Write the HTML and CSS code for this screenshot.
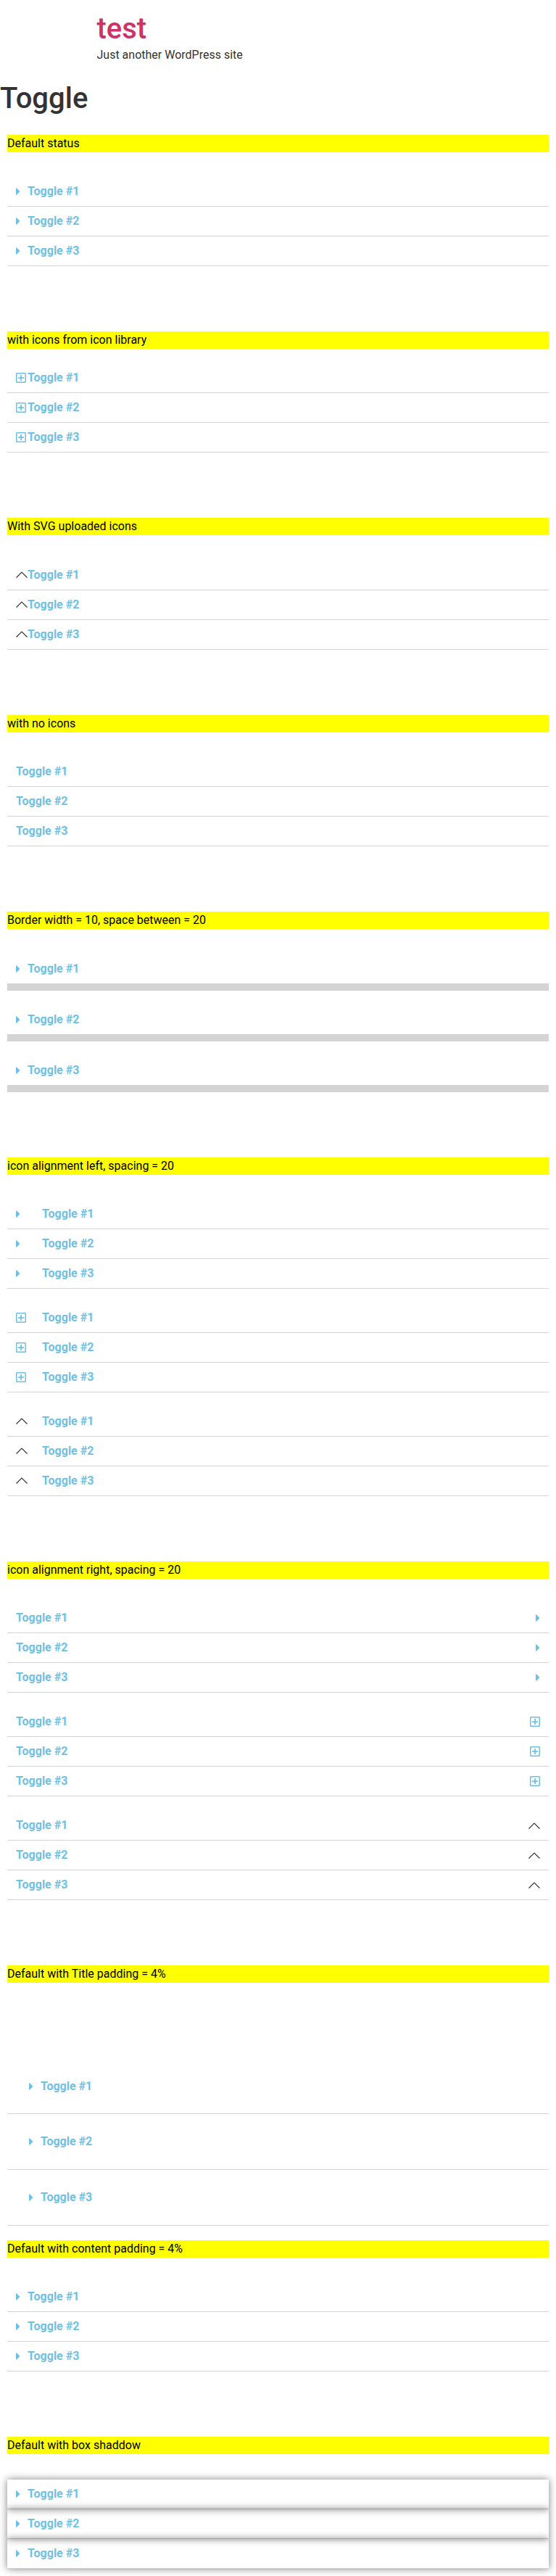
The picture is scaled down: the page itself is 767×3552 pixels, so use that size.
FILE: index.html
```html
<!DOCTYPE html>
<html lang="en">
<head>
<meta charset="utf-8">
<title>Toggle – test</title>
<link rel="stylesheet" href="styles.css">
</head>
<body>
<header class="site-header">
  <h1 class="site-title"><a href="#">test</a></h1>
  <p class="site-description">Just another WordPress site</p>
</header>
<main>
  <h1 class="page-title">Toggle</h1>
  <div class="content">

    <section class="demo demo-first">
      <p class="label">Default status</p>
      <div class="toggle">
        <div class="item"><div class="title"><span class="icon"><svg class="caret" viewBox="0 0 192 512"><path d="M0 384.662V127.338c0-17.818 21.543-26.741 34.142-14.142l128.662 128.662c7.81 7.81 7.81 20.474 0 28.284L34.142 398.804C21.543 411.404 0 402.48 0 384.662z"/></svg></span><span class="text">Toggle #1</span></div></div>
        <div class="item"><div class="title"><span class="icon"><svg class="caret" viewBox="0 0 192 512"><path d="M0 384.662V127.338c0-17.818 21.543-26.741 34.142-14.142l128.662 128.662c7.81 7.81 7.81 20.474 0 28.284L34.142 398.804C21.543 411.404 0 402.48 0 384.662z"/></svg></span><span class="text">Toggle #2</span></div></div>
        <div class="item"><div class="title"><span class="icon"><svg class="caret" viewBox="0 0 192 512"><path d="M0 384.662V127.338c0-17.818 21.543-26.741 34.142-14.142l128.662 128.662c7.81 7.81 7.81 20.474 0 28.284L34.142 398.804C21.543 411.404 0 402.48 0 384.662z"/></svg></span><span class="text">Toggle #3</span></div></div>
      </div>
    </section>

    <section class="demo">
      <p class="label label-close">with icons from icon library</p>
      <div class="toggle">
        <div class="item"><div class="title"><span class="icon"><svg class="plus" viewBox="0 0 448 512"><path d="M352 240v32c0 6.6-5.4 12-12 12h-88v88c0 6.6-5.4 12-12 12h-32c-6.6 0-12-5.4-12-12v-88h-88c-6.6 0-12-5.4-12-12v-32c0-6.6 5.4-12 12-12h88v-88c0-6.6 5.4-12 12-12h32c6.6 0 12 5.4 12 12v88h88c6.6 0 12 5.4 12 12zm96-160v352c0 26.5-21.5 48-48 48H48c-26.5 0-48-21.5-48-48V80c0-26.5 21.5-48 48-48h352c26.5 0 48 21.5 48 48zm-48 346V86c0-3.3-2.7-6-6-6H54c-3.3 0-6 2.7-6 6v340c0 3.3 2.7 6 6 6h340c3.3 0 6-2.7 6-6z"/></svg></span><span class="text">Toggle #1</span></div></div>
        <div class="item"><div class="title"><span class="icon"><svg class="plus" viewBox="0 0 448 512"><path d="M352 240v32c0 6.6-5.4 12-12 12h-88v88c0 6.6-5.4 12-12 12h-32c-6.6 0-12-5.4-12-12v-88h-88c-6.6 0-12-5.4-12-12v-32c0-6.6 5.4-12 12-12h88v-88c0-6.6 5.4-12 12-12h32c6.6 0 12 5.4 12 12v88h88c6.6 0 12 5.4 12 12zm96-160v352c0 26.5-21.5 48-48 48H48c-26.5 0-48-21.5-48-48V80c0-26.5 21.5-48 48-48h352c26.5 0 48 21.5 48 48zm-48 346V86c0-3.3-2.7-6-6-6H54c-3.3 0-6 2.7-6 6v340c0 3.3 2.7 6 6 6h340c3.3 0 6-2.7 6-6z"/></svg></span><span class="text">Toggle #2</span></div></div>
        <div class="item"><div class="title"><span class="icon"><svg class="plus" viewBox="0 0 448 512"><path d="M352 240v32c0 6.6-5.4 12-12 12h-88v88c0 6.6-5.4 12-12 12h-32c-6.6 0-12-5.4-12-12v-88h-88c-6.6 0-12-5.4-12-12v-32c0-6.6 5.4-12 12-12h88v-88c0-6.6 5.4-12 12-12h32c6.6 0 12 5.4 12 12v88h88c6.6 0 12 5.4 12 12zm96-160v352c0 26.5-21.5 48-48 48H48c-26.5 0-48-21.5-48-48V80c0-26.5 21.5-48 48-48h352c26.5 0 48 21.5 48 48zm-48 346V86c0-3.3-2.7-6-6-6H54c-3.3 0-6 2.7-6 6v340c0 3.3 2.7 6 6 6h340c3.3 0 6-2.7 6-6z"/></svg></span><span class="text">Toggle #3</span></div></div>
      </div>
    </section>

    <section class="demo">
      <p class="label">With SVG uploaded icons</p>
      <div class="toggle">
        <div class="item"><div class="title"><span class="icon"><svg class="chev" viewBox="0 0 16 9"><polyline points="0.5,8.5 8,1 15.5,8.5"/></svg></span><span class="text">Toggle #1</span></div></div>
        <div class="item"><div class="title"><span class="icon"><svg class="chev" viewBox="0 0 16 9"><polyline points="0.5,8.5 8,1 15.5,8.5"/></svg></span><span class="text">Toggle #2</span></div></div>
        <div class="item"><div class="title"><span class="icon"><svg class="chev" viewBox="0 0 16 9"><polyline points="0.5,8.5 8,1 15.5,8.5"/></svg></span><span class="text">Toggle #3</span></div></div>
      </div>
    </section>

    <section class="demo">
      <p class="label">with no icons</p>
      <div class="toggle">
        <div class="item"><div class="title"><span class="text">Toggle #1</span></div></div>
        <div class="item"><div class="title"><span class="text">Toggle #2</span></div></div>
        <div class="item"><div class="title"><span class="text">Toggle #3</span></div></div>
      </div>
    </section>

    <section class="demo">
      <p class="label">Border width = 10, space between = 20</p>
      <div class="toggle toggle-spaced">
        <div class="item"><div class="title"><span class="icon"><svg class="caret" viewBox="0 0 192 512"><path d="M0 384.662V127.338c0-17.818 21.543-26.741 34.142-14.142l128.662 128.662c7.81 7.81 7.81 20.474 0 28.284L34.142 398.804C21.543 411.404 0 402.48 0 384.662z"/></svg></span><span class="text">Toggle #1</span></div></div>
        <div class="item"><div class="title"><span class="icon"><svg class="caret" viewBox="0 0 192 512"><path d="M0 384.662V127.338c0-17.818 21.543-26.741 34.142-14.142l128.662 128.662c7.81 7.81 7.81 20.474 0 28.284L34.142 398.804C21.543 411.404 0 402.48 0 384.662z"/></svg></span><span class="text">Toggle #2</span></div></div>
        <div class="item"><div class="title"><span class="icon"><svg class="caret" viewBox="0 0 192 512"><path d="M0 384.662V127.338c0-17.818 21.543-26.741 34.142-14.142l128.662 128.662c7.81 7.81 7.81 20.474 0 28.284L34.142 398.804C21.543 411.404 0 402.48 0 384.662z"/></svg></span><span class="text">Toggle #3</span></div></div>
      </div>
    </section>

    <section class="demo">
      <p class="label">icon alignment left, spacing = 20</p>
      <div class="toggle toggle-left">
        <div class="item"><div class="title"><span class="icon"><svg class="caret" viewBox="0 0 192 512"><path d="M0 384.662V127.338c0-17.818 21.543-26.741 34.142-14.142l128.662 128.662c7.81 7.81 7.81 20.474 0 28.284L34.142 398.804C21.543 411.404 0 402.48 0 384.662z"/></svg></span><span class="text">Toggle #1</span></div></div>
        <div class="item"><div class="title"><span class="icon"><svg class="caret" viewBox="0 0 192 512"><path d="M0 384.662V127.338c0-17.818 21.543-26.741 34.142-14.142l128.662 128.662c7.81 7.81 7.81 20.474 0 28.284L34.142 398.804C21.543 411.404 0 402.48 0 384.662z"/></svg></span><span class="text">Toggle #2</span></div></div>
        <div class="item"><div class="title"><span class="icon"><svg class="caret" viewBox="0 0 192 512"><path d="M0 384.662V127.338c0-17.818 21.543-26.741 34.142-14.142l128.662 128.662c7.81 7.81 7.81 20.474 0 28.284L34.142 398.804C21.543 411.404 0 402.48 0 384.662z"/></svg></span><span class="text">Toggle #3</span></div></div>
      </div>
      <div class="toggle toggle-left">
        <div class="item"><div class="title"><span class="icon"><svg class="plus" viewBox="0 0 448 512"><path d="M352 240v32c0 6.6-5.4 12-12 12h-88v88c0 6.6-5.4 12-12 12h-32c-6.6 0-12-5.4-12-12v-88h-88c-6.6 0-12-5.4-12-12v-32c0-6.6 5.4-12 12-12h88v-88c0-6.6 5.4-12 12-12h32c6.6 0 12 5.4 12 12v88h88c6.6 0 12 5.4 12 12zm96-160v352c0 26.5-21.5 48-48 48H48c-26.5 0-48-21.5-48-48V80c0-26.5 21.5-48 48-48h352c26.5 0 48 21.5 48 48zm-48 346V86c0-3.3-2.7-6-6-6H54c-3.3 0-6 2.7-6 6v340c0 3.3 2.7 6 6 6h340c3.3 0 6-2.7 6-6z"/></svg></span><span class="text">Toggle #1</span></div></div>
        <div class="item"><div class="title"><span class="icon"><svg class="plus" viewBox="0 0 448 512"><path d="M352 240v32c0 6.6-5.4 12-12 12h-88v88c0 6.6-5.4 12-12 12h-32c-6.6 0-12-5.4-12-12v-88h-88c-6.6 0-12-5.4-12-12v-32c0-6.6 5.4-12 12-12h88v-88c0-6.6 5.4-12 12-12h32c6.6 0 12 5.4 12 12v88h88c6.6 0 12 5.4 12 12zm96-160v352c0 26.5-21.5 48-48 48H48c-26.5 0-48-21.5-48-48V80c0-26.5 21.5-48 48-48h352c26.5 0 48 21.5 48 48zm-48 346V86c0-3.3-2.7-6-6-6H54c-3.3 0-6 2.7-6 6v340c0 3.3 2.7 6 6 6h340c3.3 0 6-2.7 6-6z"/></svg></span><span class="text">Toggle #2</span></div></div>
        <div class="item"><div class="title"><span class="icon"><svg class="plus" viewBox="0 0 448 512"><path d="M352 240v32c0 6.6-5.4 12-12 12h-88v88c0 6.6-5.4 12-12 12h-32c-6.6 0-12-5.4-12-12v-88h-88c-6.6 0-12-5.4-12-12v-32c0-6.6 5.4-12 12-12h88v-88c0-6.6 5.4-12 12-12h32c6.6 0 12 5.4 12 12v88h88c6.6 0 12 5.4 12 12zm96-160v352c0 26.5-21.5 48-48 48H48c-26.5 0-48-21.5-48-48V80c0-26.5 21.5-48 48-48h352c26.5 0 48 21.5 48 48zm-48 346V86c0-3.3-2.7-6-6-6H54c-3.3 0-6 2.7-6 6v340c0 3.3 2.7 6 6 6h340c3.3 0 6-2.7 6-6z"/></svg></span><span class="text">Toggle #3</span></div></div>
      </div>
      <div class="toggle toggle-left">
        <div class="item"><div class="title"><span class="icon"><svg class="chev" viewBox="0 0 16 9"><polyline points="0.5,8.5 8,1 15.5,8.5"/></svg></span><span class="text">Toggle #1</span></div></div>
        <div class="item"><div class="title"><span class="icon"><svg class="chev" viewBox="0 0 16 9"><polyline points="0.5,8.5 8,1 15.5,8.5"/></svg></span><span class="text">Toggle #2</span></div></div>
        <div class="item"><div class="title"><span class="icon"><svg class="chev" viewBox="0 0 16 9"><polyline points="0.5,8.5 8,1 15.5,8.5"/></svg></span><span class="text">Toggle #3</span></div></div>
      </div>
    </section>

    <section class="demo">
      <p class="label">icon alignment right, spacing = 20</p>
      <div class="toggle toggle-right">
        <div class="item"><div class="title"><span class="text">Toggle #1</span><span class="icon"><svg class="caret" viewBox="0 0 192 512"><path d="M0 384.662V127.338c0-17.818 21.543-26.741 34.142-14.142l128.662 128.662c7.81 7.81 7.81 20.474 0 28.284L34.142 398.804C21.543 411.404 0 402.48 0 384.662z"/></svg></span></div></div>
        <div class="item"><div class="title"><span class="text">Toggle #2</span><span class="icon"><svg class="caret" viewBox="0 0 192 512"><path d="M0 384.662V127.338c0-17.818 21.543-26.741 34.142-14.142l128.662 128.662c7.81 7.81 7.81 20.474 0 28.284L34.142 398.804C21.543 411.404 0 402.48 0 384.662z"/></svg></span></div></div>
        <div class="item"><div class="title"><span class="text">Toggle #3</span><span class="icon"><svg class="caret" viewBox="0 0 192 512"><path d="M0 384.662V127.338c0-17.818 21.543-26.741 34.142-14.142l128.662 128.662c7.81 7.81 7.81 20.474 0 28.284L34.142 398.804C21.543 411.404 0 402.48 0 384.662z"/></svg></span></div></div>
      </div>
      <div class="toggle toggle-right">
        <div class="item"><div class="title"><span class="text">Toggle #1</span><span class="icon"><svg class="plus" viewBox="0 0 448 512"><path d="M352 240v32c0 6.6-5.4 12-12 12h-88v88c0 6.6-5.4 12-12 12h-32c-6.6 0-12-5.4-12-12v-88h-88c-6.6 0-12-5.4-12-12v-32c0-6.6 5.4-12 12-12h88v-88c0-6.6 5.4-12 12-12h32c6.6 0 12 5.4 12 12v88h88c6.6 0 12 5.4 12 12zm96-160v352c0 26.5-21.5 48-48 48H48c-26.5 0-48-21.5-48-48V80c0-26.5 21.5-48 48-48h352c26.5 0 48 21.5 48 48zm-48 346V86c0-3.3-2.7-6-6-6H54c-3.3 0-6 2.7-6 6v340c0 3.3 2.7 6 6 6h340c3.3 0 6-2.7 6-6z"/></svg></span></div></div>
        <div class="item"><div class="title"><span class="text">Toggle #2</span><span class="icon"><svg class="plus" viewBox="0 0 448 512"><path d="M352 240v32c0 6.6-5.4 12-12 12h-88v88c0 6.6-5.4 12-12 12h-32c-6.6 0-12-5.4-12-12v-88h-88c-6.6 0-12-5.4-12-12v-32c0-6.6 5.4-12 12-12h88v-88c0-6.6 5.4-12 12-12h32c6.6 0 12 5.4 12 12v88h88c6.6 0 12 5.4 12 12zm96-160v352c0 26.5-21.5 48-48 48H48c-26.5 0-48-21.5-48-48V80c0-26.5 21.5-48 48-48h352c26.5 0 48 21.5 48 48zm-48 346V86c0-3.3-2.7-6-6-6H54c-3.3 0-6 2.7-6 6v340c0 3.3 2.7 6 6 6h340c3.3 0 6-2.7 6-6z"/></svg></span></div></div>
        <div class="item"><div class="title"><span class="text">Toggle #3</span><span class="icon"><svg class="plus" viewBox="0 0 448 512"><path d="M352 240v32c0 6.6-5.4 12-12 12h-88v88c0 6.6-5.4 12-12 12h-32c-6.6 0-12-5.4-12-12v-88h-88c-6.6 0-12-5.4-12-12v-32c0-6.6 5.4-12 12-12h88v-88c0-6.6 5.4-12 12-12h32c6.6 0 12 5.4 12 12v88h88c6.6 0 12 5.4 12 12zm96-160v352c0 26.5-21.5 48-48 48H48c-26.5 0-48-21.5-48-48V80c0-26.5 21.5-48 48-48h352c26.5 0 48 21.5 48 48zm-48 346V86c0-3.3-2.7-6-6-6H54c-3.3 0-6 2.7-6 6v340c0 3.3 2.7 6 6 6h340c3.3 0 6-2.7 6-6z"/></svg></span></div></div>
      </div>
      <div class="toggle toggle-right">
        <div class="item"><div class="title"><span class="text">Toggle #1</span><span class="icon"><svg class="chev" viewBox="0 0 16 9"><polyline points="0.5,8.5 8,1 15.5,8.5"/></svg></span></div></div>
        <div class="item"><div class="title"><span class="text">Toggle #2</span><span class="icon"><svg class="chev" viewBox="0 0 16 9"><polyline points="0.5,8.5 8,1 15.5,8.5"/></svg></span></div></div>
        <div class="item"><div class="title"><span class="text">Toggle #3</span><span class="icon"><svg class="chev" viewBox="0 0 16 9"><polyline points="0.5,8.5 8,1 15.5,8.5"/></svg></span></div></div>
      </div>
    </section>

    <section class="demo">
      <p class="label label-far">Default with Title padding = 4%</p>
      <div class="toggle toggle-pad">
        <div class="item"><div class="title"><span class="icon"><svg class="caret" viewBox="0 0 192 512"><path d="M0 384.662V127.338c0-17.818 21.543-26.741 34.142-14.142l128.662 128.662c7.81 7.81 7.81 20.474 0 28.284L34.142 398.804C21.543 411.404 0 402.48 0 384.662z"/></svg></span><span class="text">Toggle #1</span></div></div>
        <div class="item"><div class="title"><span class="icon"><svg class="caret" viewBox="0 0 192 512"><path d="M0 384.662V127.338c0-17.818 21.543-26.741 34.142-14.142l128.662 128.662c7.81 7.81 7.81 20.474 0 28.284L34.142 398.804C21.543 411.404 0 402.48 0 384.662z"/></svg></span><span class="text">Toggle #2</span></div></div>
        <div class="item"><div class="title"><span class="icon"><svg class="caret" viewBox="0 0 192 512"><path d="M0 384.662V127.338c0-17.818 21.543-26.741 34.142-14.142l128.662 128.662c7.81 7.81 7.81 20.474 0 28.284L34.142 398.804C21.543 411.404 0 402.48 0 384.662z"/></svg></span><span class="text">Toggle #3</span></div></div>
      </div>
    </section>

    <section class="demo demo-tight">
      <p class="label">Default with content padding = 4%</p>
      <div class="toggle">
        <div class="item"><div class="title"><span class="icon"><svg class="caret" viewBox="0 0 192 512"><path d="M0 384.662V127.338c0-17.818 21.543-26.741 34.142-14.142l128.662 128.662c7.81 7.81 7.81 20.474 0 28.284L34.142 398.804C21.543 411.404 0 402.48 0 384.662z"/></svg></span><span class="text">Toggle #1</span></div></div>
        <div class="item"><div class="title"><span class="icon"><svg class="caret" viewBox="0 0 192 512"><path d="M0 384.662V127.338c0-17.818 21.543-26.741 34.142-14.142l128.662 128.662c7.81 7.81 7.81 20.474 0 28.284L34.142 398.804C21.543 411.404 0 402.48 0 384.662z"/></svg></span><span class="text">Toggle #2</span></div></div>
        <div class="item"><div class="title"><span class="icon"><svg class="caret" viewBox="0 0 192 512"><path d="M0 384.662V127.338c0-17.818 21.543-26.741 34.142-14.142l128.662 128.662c7.81 7.81 7.81 20.474 0 28.284L34.142 398.804C21.543 411.404 0 402.48 0 384.662z"/></svg></span><span class="text">Toggle #3</span></div></div>
      </div>
    </section>

    <section class="demo">
      <p class="label">Default with box shaddow</p>
      <div class="toggle toggle-shadow">
        <div class="item"><div class="title"><span class="icon"><svg class="caret" viewBox="0 0 192 512"><path d="M0 384.662V127.338c0-17.818 21.543-26.741 34.142-14.142l128.662 128.662c7.81 7.81 7.81 20.474 0 28.284L34.142 398.804C21.543 411.404 0 402.48 0 384.662z"/></svg></span><span class="text">Toggle #1</span></div></div>
        <div class="item"><div class="title"><span class="icon"><svg class="caret" viewBox="0 0 192 512"><path d="M0 384.662V127.338c0-17.818 21.543-26.741 34.142-14.142l128.662 128.662c7.81 7.81 7.81 20.474 0 28.284L34.142 398.804C21.543 411.404 0 402.48 0 384.662z"/></svg></span><span class="text">Toggle #2</span></div></div>
        <div class="item"><div class="title"><span class="icon"><svg class="caret" viewBox="0 0 192 512"><path d="M0 384.662V127.338c0-17.818 21.543-26.741 34.142-14.142l128.662 128.662c7.81 7.81 7.81 20.474 0 28.284L34.142 398.804C21.543 411.404 0 402.48 0 384.662z"/></svg></span><span class="text">Toggle #3</span></div></div>
      </div>
    </section>

  </div>
</main>
</body>
</html>
```

FILE: styles.css
```css
* {
  box-sizing: border-box;
}

body {
  margin: 0;
  background: #fff;
  color: #333;
  font-family: Roboto, "Liberation Sans", sans-serif;
  font-size: 16px;
  line-height: 1.5;
}

.site-header {
  max-width: 500px;
  margin: 0 auto;
  padding: 16px 0;
}

.site-title {
  margin: 0;
  font-size: 40px;
  line-height: 48px;
  font-weight: 500;
}

.site-title a {
  color: #c36;
  text-decoration: none;
}

.site-description {
  margin: 0;
  font-size: 16px;
  line-height: 24px;
}

.page-title {
  margin: 8px 0 0;
  font-size: 40px;
  line-height: 48px;
  font-weight: 500;
  color: #333;
}

.content {
  padding: 0 10px 10px;
}

.demo {
  margin-top: 90px;
}

.demo-first {
  margin-top: 26px;
}

.demo-tight {
  margin-top: 20px;
}

.label {
  margin: 0 0 34.4px;
  background: #ff0;
  color: #000;
  line-height: 24px;
}

.label-close {
  margin-bottom: 20px;
}

.label-far {
  margin-bottom: 104.4px;
}

.toggle + .toggle {
  margin-top: 20px;
}

.item {
  border-bottom: 1px solid #d4d4d4;
}

.title {
  display: flex;
  align-items: center;
  padding: 12px;
  color: #6ec1e4;
  font-weight: 700;
  line-height: 16px;
}

.text {
  display: block;
}

.icon {
  display: flex;
  align-items: center;
  flex: none;
  width: 16px;
  height: 16px;
}

.icon svg {
  display: block;
}

.caret {
  width: 6px;
  height: 16px;
  fill: #6ec1e4;
}

.plus {
  width: 14px;
  height: 16px;
  fill: #6ec1e4;
}

.chev {
  width: 16px;
  height: 9px;
  fill: none;
  stroke: #333;
  stroke-width: 1.2;
}

.toggle-spaced .item {
  border-bottom-width: 10px;
}

.toggle-spaced .item + .item {
  margin-top: 20px;
}

.toggle-left .icon {
  margin-right: 20px;
}

.toggle-right .icon {
  margin-left: auto;
  justify-content: flex-end;
}

.toggle-pad .title {
  padding: 4%;
}

.toggle-shadow .item {
  box-shadow: 0 0 10px rgba(0, 0, 0, 0.5);
}
```
